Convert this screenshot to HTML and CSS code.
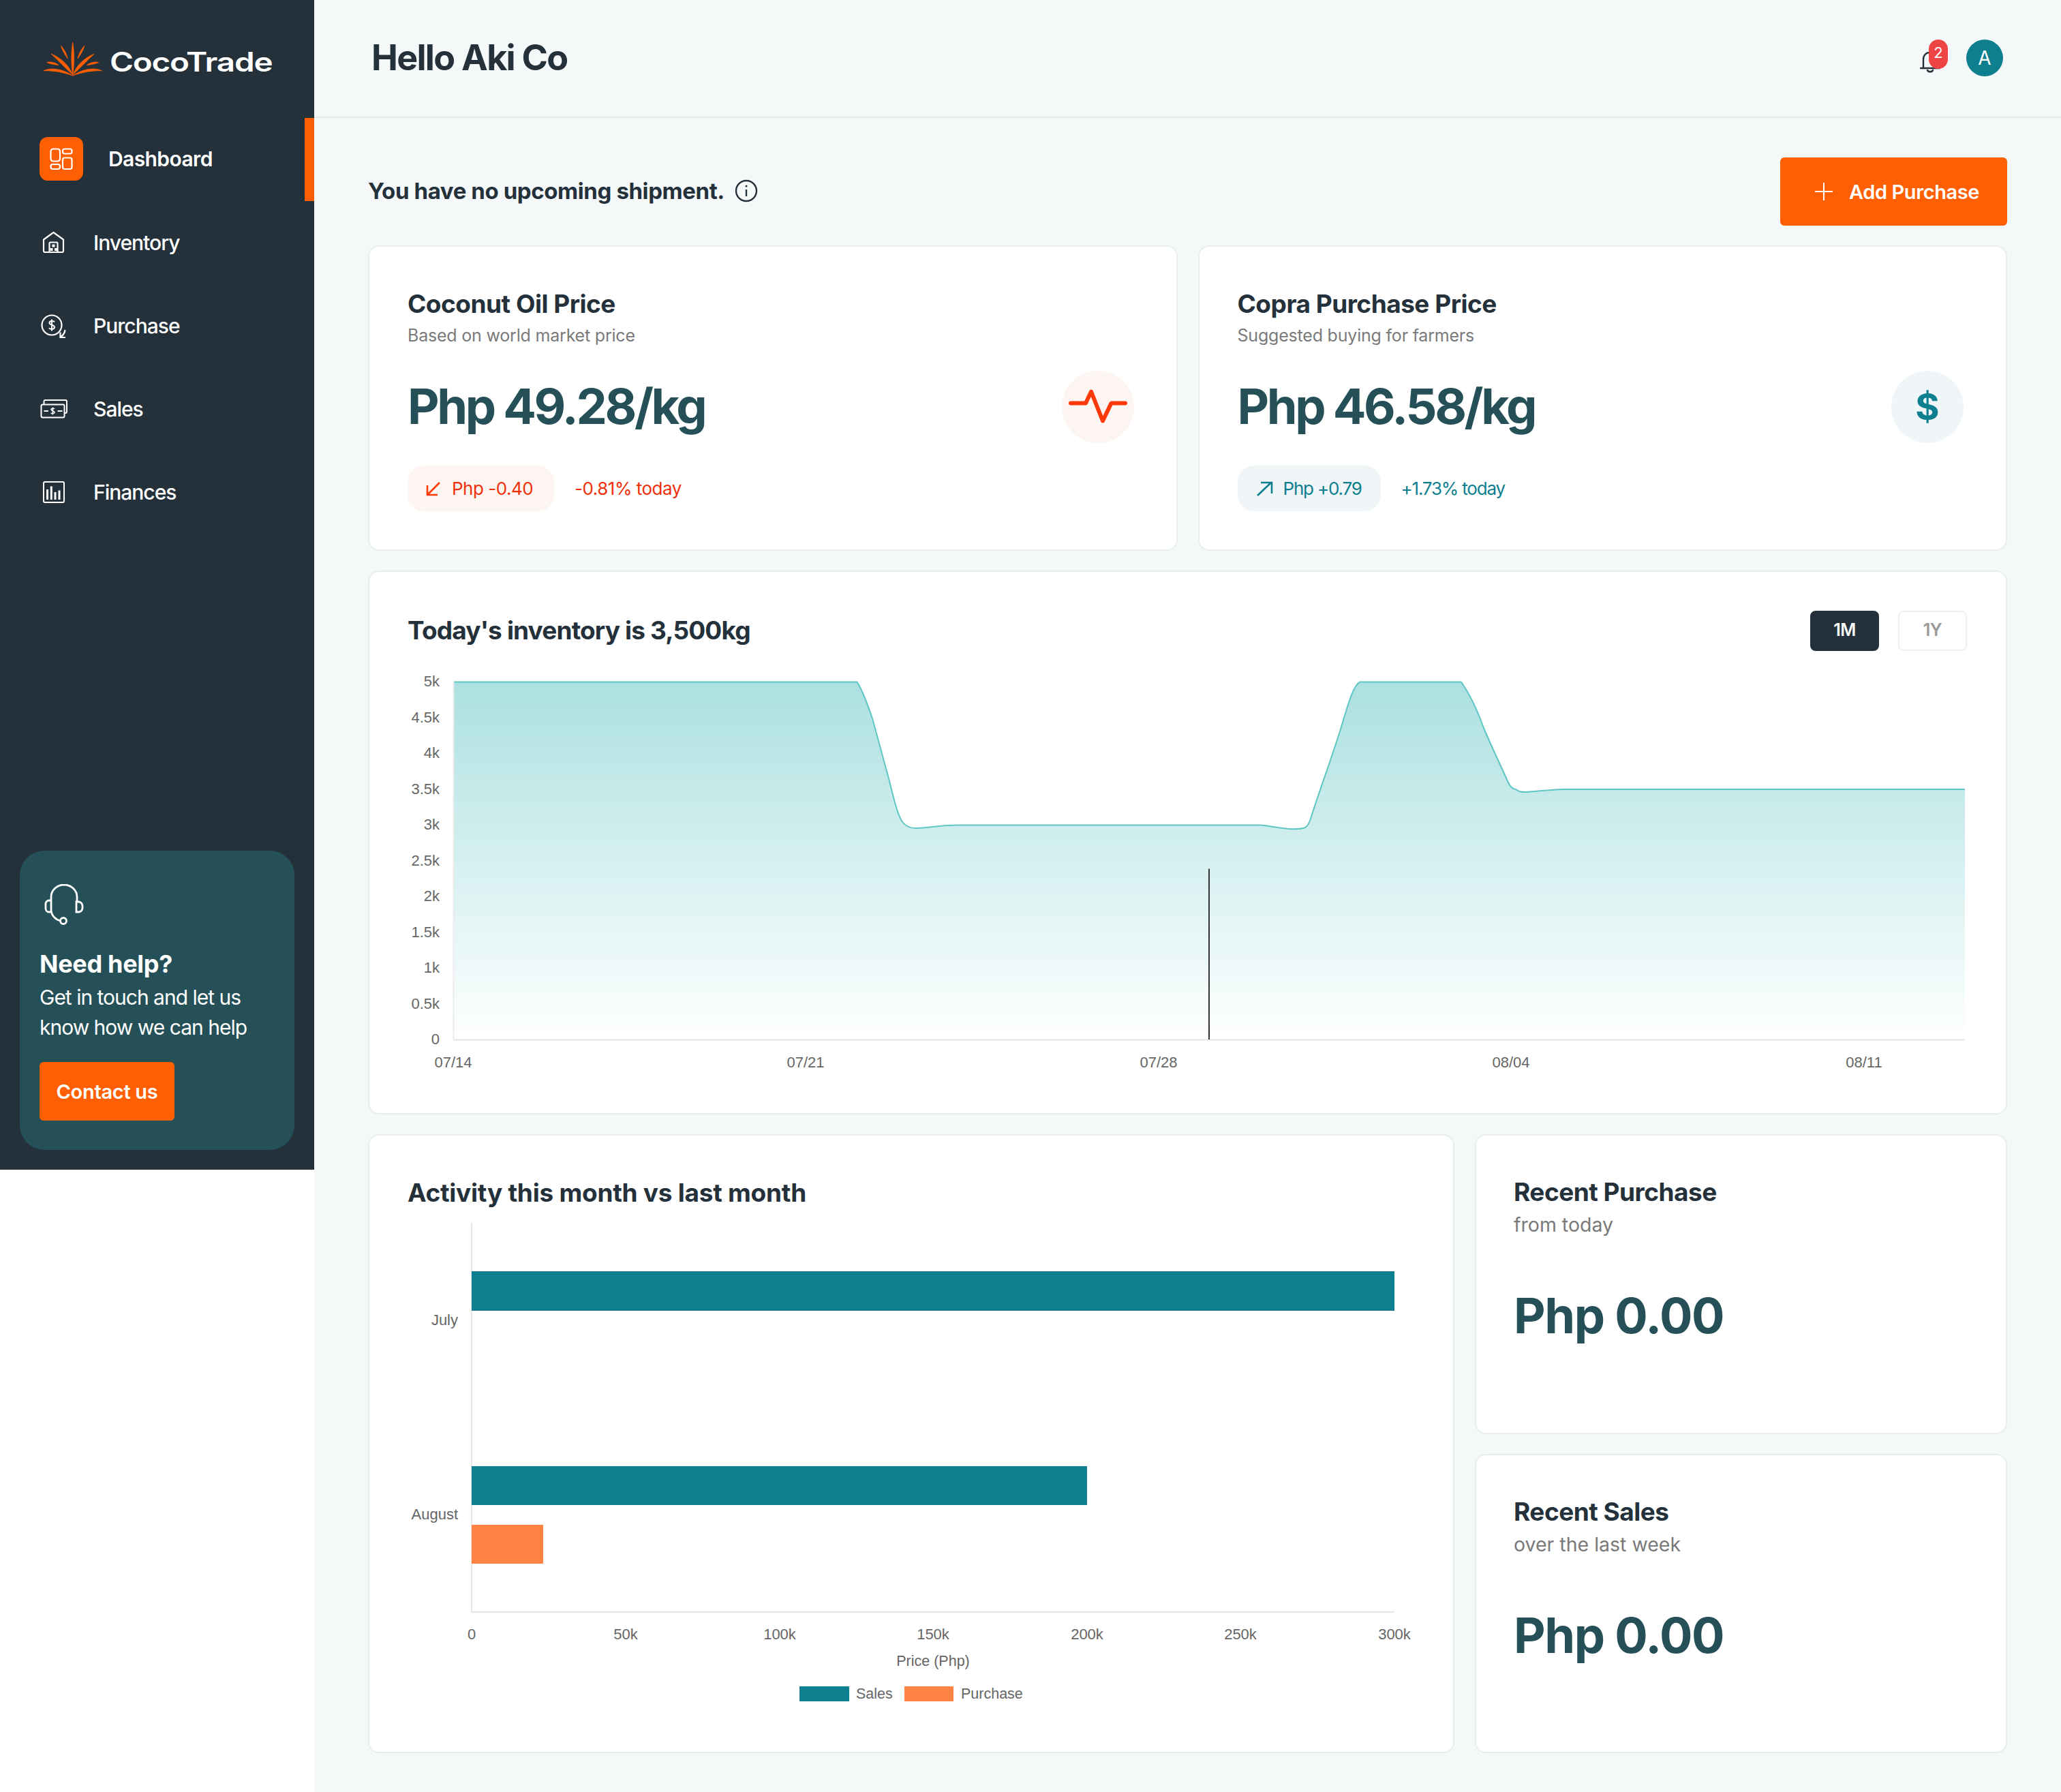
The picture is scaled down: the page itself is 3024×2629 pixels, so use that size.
FILE: index.html
```html
<!DOCTYPE html>
<html>
<head>
  <title>CocoTrade</title>
  <link rel="stylesheet" href="styles.css">
</head>
<body>
  <div class="layout">
    <aside class="sidebar">
      <div class="logo">
        <svg class="logo-mark" width="86" height="50" viewBox="0 0 86 50">
          <g fill="#ff5f03" stroke="#ff5f03" stroke-width="0.7">
            <path d="M42.7 0C45 14 45.5 30 42.7 49C40 30 40.5 14 42.7 0Z"/>
            <path d="M11 17C24 22 37 33 42 47C32 38 22 27 11 17Z"/>
            <path d="M25.3 5C30 10 34 17 35.3 24C31 18 27 11 25.3 5Z"/>
            <path d="M4.7 29.5C11 28 18 30 22 33.5C15 33 9 31.5 4.7 29.5Z"/>
            <path d="M0 41.7C12 36 30 40 42.5 49C30 44 14 41.5 0 41.7Z"/>
            <g transform="matrix(-1 0 0 1 85.4 0)">
              <path d="M11 17C24 22 37 33 42 47C32 38 22 27 11 17Z"/>
              <path d="M25.3 5C30 10 34 17 35.3 24C31 18 27 11 25.3 5Z"/>
              <path d="M4.7 29.5C11 28 18 30 22 33.5C15 33 9 31.5 4.7 29.5Z"/>
              <path d="M0 41.7C12 36 30 40 42.5 49C30 44 14 41.5 0 41.7Z"/>
            </g>
          </g>
        </svg>
        <span class="logo-text">CocoTrade</span>
      </div>

      <nav class="nav">
        <a class="nav-item active">
          <span class="nav-tile">
            <svg width="64" height="64" viewBox="0 0 64 64" fill="none" stroke="#fff" stroke-width="2.2">
              <rect x="16.5" y="17.5" width="13.5" height="18" rx="3.5"/>
              <rect x="34" y="17.5" width="13.5" height="7" rx="3"/>
              <rect x="34" y="30.5" width="13.5" height="16.5" rx="3"/>
              <rect x="16.5" y="40" width="13.5" height="7" rx="3"/>
            </svg>
          </span>
          Dashboard
        </a>
        <a class="nav-item">
          <span class="nav-icon">
            <svg width="34" height="34" viewBox="0 0 34 34" fill="none" stroke="#fff" stroke-width="2.2" stroke-linejoin="round">
              <path d="M2 12.5L16.5 2L31 12.5V29A2 2 0 0 1 29 31H4A2 2 0 0 1 2 29Z"/>
              <path d="M10.5 31V18A1.5 1.5 0 0 1 12 16.5H21A1.5 1.5 0 0 1 22.5 18V31"/>
              <g fill="#fff" stroke="none">
                <rect x="14.5" y="19.5" width="4" height="4"/>
                <rect x="11.5" y="25" width="4" height="4"/>
                <rect x="18" y="25" width="4" height="4"/>
              </g>
            </svg>
          </span>
          Inventory
        </a>
        <a class="nav-item">
          <span class="nav-icon">
            <svg width="40" height="40" viewBox="0 0 40 40" fill="none" stroke="#fff" stroke-width="2.2">
              <circle cx="17" cy="19" r="14.5"/>
              <path d="M21 14.5C20 12.5 13.5 12.3 13.5 15.8C13.5 19.3 21 18.2 21 22C21 25.5 14.5 25.5 13 23.2M17 10.5V27.5" stroke-width="2"/>
              <path d="M36.5 26C36 30 33.5 34 29.5 37M29.5 29.5V37H37"/>
            </svg>
          </span>
          Purchase
        </a>
        <a class="nav-item">
          <span class="nav-icon">
            <svg width="40" height="28" viewBox="0 0 40 28" fill="none" stroke="#fff" stroke-width="2">
              <rect x="1.5" y="7.5" width="34" height="19" rx="2"/>
              <path d="M5.5 7V3A2 2 0 0 1 7.5 1H37A2 2 0 0 1 39 3V18A2 2 0 0 1 37 20H35.5"/>
              <path d="M5.5 17H12M25.5 17H32.5"/>
              <path d="M21 14C20.5 12.8 16 12.7 16 14.8C16 17 21 16.4 21 18.8C21 21 16.5 21 15.8 19.8M18.4 11.5V22.5" stroke-width="1.5"/>
            </svg>
          </span>
          Sales
        </a>
        <a class="nav-item">
          <span class="nav-icon">
            <svg width="32" height="32" viewBox="0 0 32 32" fill="none" stroke="#fff" stroke-width="2">
              <rect x="1" y="1" width="30" height="30" rx="2"/>
              <path d="M6.5 27V12M12.3 27V7.5M18 27V16M24 27V13.5" stroke-width="3"/>
            </svg>
          </span>
          Finances
        </a>
      </nav>

      <div class="help">
        <svg class="help-icon" width="58" height="60" viewBox="0 0 58 60" fill="none" stroke="#fff" stroke-width="2.8">
          <path d="M24 54C16 52 10 46 10 37V19A19 18 0 0 1 48 19V27"/>
          <circle cx="28" cy="54" r="4.5"/>
          <path d="M47 26H50A6 6 0 0 1 56 32V35A6 6 0 0 1 50 41H47Z"/>
          <path d="M9.500 24H7A5 5 0 0 0 2 29V36A5 5 0 0 0 7 41H9.500"/>
        </svg>
        <h3 class="help-title">Need help?</h3>
        <p class="help-text">Get in touch and let us<br>know how we can help</p>
        <button class="contact-btn">Contact us</button>
      </div>
    </aside>

    <main class="main">
      <header class="topbar">
        <h1 class="greeting">Hello Aki Co</h1>
        <div class="top-actions">
          <div class="bell">
            <svg width="30" height="34" viewBox="0 0 30 34" fill="none" stroke="#24303a" stroke-width="2.4" stroke-linecap="round">
              <path d="M5 27V14C5 8 9 4 15 4C21 4 25 8 25 14V27"/>
              <path d="M1 27H29"/>
              <path d="M11 30C12 33 18 33 19 30"/>
            </svg>
            <span class="badge">2</span>
          </div>
          <div class="avatar">A</div>
        </div>
      </header>

      <div class="content">
        <div class="ship-row">
          <div class="ship-note">
            You have no upcoming shipment.
            <svg width="34" height="34" viewBox="0 0 34 34" fill="none" stroke="#24303a" stroke-width="2.4">
              <circle cx="17" cy="17" r="15"/>
              <path d="M17 15V25"/>
              <circle cx="17" cy="10" r="1.500" fill="#24303a" stroke="none"/>
            </svg>
          </div>
          <button class="add-btn">
            <svg width="28" height="28" viewBox="0 0 28 28" stroke="#fff" stroke-width="2"><path d="M14 1V27M1 14H27"/></svg>
            Add Purchase
          </button>
        </div>

        <div class="stats">
          <section class="card stat">
            <h2 class="card-title">Coconut Oil Price</h2>
            <p class="card-sub">Based on world market price</p>
            <div class="price-row">
              <div class="price">Php 49.28/kg</div>
              <div class="circle circle-red">
                <svg width="106" height="106" viewBox="0 0 106 106" fill="none" stroke="#ff3a0a" stroke-width="6" stroke-linecap="round" stroke-linejoin="round">
                  <path d="M13 47.500H35L43 30.500L60 73.500L72.500 47.500H93"/>
                </svg>
              </div>
            </div>
            <div class="change down">
              <span class="pill">
                <svg width="24" height="24" viewBox="0 0 24 24" fill="none" stroke="#ff3a0a" stroke-width="2.6"><path d="M21 3L4 20M3 7V21H18"/></svg>
                Php -0.40
              </span>
              <span>-0.81% today</span>
            </div>
          </section>

          <section class="card stat">
            <h2 class="card-title">Copra Purchase Price</h2>
            <p class="card-sub">Suggested buying for farmers</p>
            <div class="price-row">
              <div class="price">Php 46.58/kg</div>
              <div class="circle circle-teal">$</div>
            </div>
            <div class="change up">
              <span class="pill">
                <svg width="26" height="24" viewBox="0 0 26 24" fill="none" stroke="#0e7f8f" stroke-width="2.6"><path d="M3 22L23 3M8 3H24V19"/></svg>
                Php +0.79
              </span>
              <span>+1.73% today</span>
            </div>
          </section>
        </div>

        <section class="card inventory">
          <div class="inv-head">
            <h2 class="card-title narrow">Today's inventory is 3,500kg</h2>
            <div class="range">
              <button class="range-btn on">1M</button>
              <button class="range-btn">1Y</button>
            </div>
          </div>
          <svg class="line-chart" width="2287" height="610" viewBox="0 0 2287 610">
            <defs>
              <linearGradient id="fade" x1="0" y1="0" x2="0" y2="1">
                <stop offset="0" stop-color="#ace0e0"/>
                <stop offset="1" stop-color="#ffffff"/>
              </linearGradient>
            </defs>
            <path fill="url(#fade)" d="M67 25.500H658.500C668 40 675 62 681 79C690 112 698 141 706 171C712 195 718 222 726 232C731 238 737 240 745 240C765 239 785 235.500 805 235.500H1251C1270 237 1290 243 1304 241C1316 241 1320 239 1324 226C1337 185 1352 145 1367 98C1378 62 1386 30 1396.600 25.500H1545C1555 40 1568 65 1578 93C1590 122 1603 148 1613 171C1617 180 1621 183 1625 183C1630 187 1634 187 1639 187C1660 186 1675 183 1696 183H2284V550.500H67Z"/>
            <path fill="none" stroke="#5ec6c3" stroke-width="2" d="M67 25.500H658.500C668 40 675 62 681 79C690 112 698 141 706 171C712 195 718 222 726 232C731 238 737 240 745 240C765 239 785 235.500 805 235.500H1251C1270 237 1290 243 1304 241C1316 241 1320 239 1324 226C1337 185 1352 145 1367 98C1378 62 1386 30 1396.600 25.500H1545C1555 40 1568 65 1578 93C1590 122 1603 148 1613 171C1617 180 1621 183 1625 183C1630 187 1634 187 1639 187C1660 186 1675 183 1696 183H2284"/>
            <path d="M66.500 25V550.500" stroke="#ececec" stroke-width="2"/>
            <path d="M66 550.500H2284" stroke="#e6e6e6" stroke-width="2"/>
            <path d="M1175 299.500V550" stroke="#333" stroke-width="2"/>
            <g class="tick" text-anchor="end">
              <text x="46" y="32">5k</text>
              <text x="46" y="84.500">4.5k</text>
              <text x="46" y="137">4k</text>
              <text x="46" y="189.500">3.5k</text>
              <text x="46" y="242">3k</text>
              <text x="46" y="294.500">2.5k</text>
              <text x="46" y="347">2k</text>
              <text x="46" y="399.500">1.5k</text>
              <text x="46" y="452">1k</text>
              <text x="46" y="504.500">0.5k</text>
              <text x="46" y="557">0</text>
            </g>
            <g class="tick" text-anchor="middle">
              <text x="66" y="591">07/14</text>
              <text x="583" y="591">07/21</text>
              <text x="1101" y="591">07/28</text>
              <text x="1618" y="591">08/04</text>
              <text x="2136" y="591">08/11</text>
            </g>
          </svg>
        </section>

        <div class="bottom">
          <section class="card activity">
            <h2 class="card-title wide">Activity this month vs last month</h2>
            <svg class="bar-chart" width="1476" height="725" viewBox="0 0 1476 725">
              <path d="M93 8V580M92 580H1447" stroke="#e6e6e6" stroke-width="2" fill="none"/>
              <rect x="93" y="80" width="1354" height="58" fill="#0e7f8f"/>
              <rect x="93" y="366" width="903" height="57" fill="#0e7f8f"/>
              <rect x="93" y="452" width="105" height="57" fill="#ff8343"/>
              <g class="tick" text-anchor="end">
                <text x="73" y="159">July</text>
                <text x="73" y="444">August</text>
              </g>
              <g class="tick" text-anchor="middle">
                <text x="93" y="620">0</text>
                <text x="319" y="620">50k</text>
                <text x="545" y="620">100k</text>
                <text x="770" y="620">150k</text>
                <text x="996" y="620">200k</text>
                <text x="1221" y="620">250k</text>
                <text x="1447" y="620">300k</text>
                <text class="tick-small" x="770" y="659">Price (Php)</text>
              </g>
              <rect x="574" y="689" width="73" height="22" fill="#0e7f8f"/>
              <text class="tick tick-small" x="657" y="707">Sales</text>
              <rect x="728" y="689" width="72" height="22" fill="#ff8343"/>
              <text class="tick tick-small" x="811" y="707">Purchase</text>
            </svg>
          </section>
          <div class="recent">
            <section class="card recent-card">
              <h2 class="card-title">Recent Purchase</h2>
              <p class="recent-sub">from today</p>
              <div class="price recent-price">Php 0.00</div>
            </section>
            <section class="card recent-card">
              <h2 class="card-title">Recent Sales</h2>
              <p class="recent-sub">over the last week</p>
              <div class="price recent-price">Php 0.00</div>
            </section>
          </div>
        </div>
      </div>
    </main>
  </div>
</body>
</html>
```

FILE: styles.css
```css
* {
  box-sizing: border-box;
}
body {
  margin: 0;
  background: #fff;
  color: #24303a;
  font-family: Inter, "Liberation Sans", sans-serif;
}
h1, h2, h3, p {
  margin: 0;
}
.layout {
  display: flex;
  align-items: flex-start;
}

/* sidebar */
.sidebar {
  display: flex;
  flex-direction: column;
  flex: none;
  width: 461px;
  height: 1716px;
  background: #24303a;
  color: #fff;
}
.logo {
  display: flex;
  align-items: center;
  gap: 11px;
  height: 173px;
  padding-left: 64px;
}
.logo-text {
  margin-top: 7px;
  font-size: 39px;
  font-weight: 600;
  transform: scaleX(1.22);
  transform-origin: left center;
  letter-spacing: -1px;
}
.nav-item {
  display: flex;
  align-items: center;
  position: relative;
  gap: 37px;
  height: 122px;
  padding-left: 58px;
  font-size: 30px;
  font-weight: 500;
  letter-spacing: -1px;
}
.nav-item.active {
  font-weight: 600;
  letter-spacing: -0.6px;
  padding-bottom: 2px;
}
.nav-item.active::after {
  content: "";
  position: absolute;
  top: 0;
  right: 0;
  bottom: 0;
  width: 14px;
  background: #ff5f03;
}
.nav-tile {
  display: flex;
  width: 64px;
  height: 64px;
  background: #ff5f03;
  border-radius: 12px;
}
.nav-icon {
  display: flex;
  align-items: center;
  justify-content: center;
  width: 42px;
}
.help {
  display: flex;
  flex-direction: column;
  align-items: flex-start;
  margin: auto 29px 29px;
  width: 403px;
  height: 439px;
  padding: 49px 29px 0;
  background: #255058;
  border-radius: 36px;
}
.help-icon {
  margin-left: 7px;
}
.help-title {
  margin-top: 35px;
  font-size: 36px;
  line-height: 44px;
  font-weight: 700;
  letter-spacing: -0.3px;
}
.help-text {
  margin-top: 5px;
  font-size: 30px;
  line-height: 44px;
  letter-spacing: -1px;
}
.contact-btn {
  width: 198px;
  height: 86px;
  margin-top: 29px;
  border: 0;
  border-radius: 6px;
  background: #ff5f03;
  color: #fff;
  font: 600 29px Inter, sans-serif;
  letter-spacing: -0.3px;
}

/* main */
.main {
  flex: 1;
  min-height: 2629px;
  background: #f4f8f9;
}
.topbar {
  display: flex;
  align-items: center;
  justify-content: space-between;
  height: 173px;
  padding: 0 85px 1px 84px;
  border-bottom: 2px solid #e6ebed;
}
.greeting {
  margin-bottom: 2px;
  font-size: 52px;
  font-weight: 650;
  letter-spacing: -1.7px;
}
.top-actions {
  display: flex;
  align-items: center;
  gap: 30px;
}
.bell {
  position: relative;
  width: 38px;
  height: 44px;
  padding-top: 10px;
}
.badge {
  position: absolute;
  top: -5px;
  right: -3px;
  width: 28px;
  height: 43px;
  border-radius: 14px;
  background: #ef4444;
  color: #fff;
  font-size: 22px;
  line-height: 38px;
  text-align: center;
}
.avatar {
  width: 54px;
  height: 54px;
  border-radius: 50%;
  background: #0e7f8f;
  color: #fff;
  font-size: 28px;
  line-height: 54px;
  text-align: center;
}
.content {
  display: flex;
  flex-direction: column;
  gap: 29px;
  padding: 58px 79px 0;
}
.ship-row {
  display: flex;
  align-items: center;
  justify-content: space-between;
  height: 100px;
}
.ship-note {
  display: flex;
  align-items: center;
  gap: 15px;
  padding-bottom: 2px;
  font-size: 33px;
  font-weight: 650;
  letter-spacing: -0.4px;
}
.add-btn {
  display: flex;
  align-items: center;
  gap: 23px;
  width: 333px;
  height: 100px;
  padding-left: 50px;
  border: 0;
  border-radius: 6px;
  background: #ff5f03;
  color: #fff;
  font: 600 29px Inter, sans-serif;
  letter-spacing: -0.4px;
}
.stats {
  display: grid;
  grid-template-columns: 1fr 1fr;
  gap: 30px;
}
.card {
  background: #fff;
  border: 2px solid #e6eef0;
  border-radius: 16px;
}
.stat {
  height: 448px;
  padding: 64px 62px 0 56px;
}
.card-title {
  font-size: 37px;
  line-height: 40px;
  font-weight: 650;
  letter-spacing: -0.5px;
}
.card-title.wide {
  letter-spacing: -0.25px;
}
.card-title.narrow {
  letter-spacing: -0.85px;
}
.card-sub {
  margin-top: 10px;
  font-size: 25px;
  line-height: 32px;
  color: #7a7a7a;
  letter-spacing: -0.2px;
}
.price-row {
  display: flex;
  align-items: center;
  justify-content: space-between;
  margin-top: 36px;
}
.price-row .price {
  padding-bottom: 3px;
}
.price {
  font-size: 72px;
  font-weight: 650;
  color: #255058;
  letter-spacing: -3.4px;
}
.circle {
  width: 106px;
  height: 106px;
  border-radius: 50%;
}
.circle-red {
  background: #fdf5f1;
}
.circle-teal {
  background: #f0f5f7;
  color: #0e7f8f;
  font-size: 54px;
  font-weight: 700;
  line-height: 106px;
  text-align: center;
}
.change {
  display: flex;
  align-items: center;
  gap: 30px;
  margin-top: 33px;
  font-size: 26px;
  letter-spacing: -0.5px;
}
.pill {
  display: flex;
  align-items: center;
  gap: 15px;
  height: 67px;
  padding: 0 28px 0 26px;
  border-radius: 24px;
}
.down {
  color: #f0300a;
}
.down .pill {
  background: #fdf5f1;
  padding-right: 31px;
}
.up {
  color: #0e7f8f;
  letter-spacing: -1.2px;
}
.up .pill {
  background: #f0f5f7;
}
.inventory {
  height: 798px;
  padding: 56px 57px 0 56px;
}
.inv-head {
  display: flex;
  align-items: center;
  justify-content: space-between;
  height: 60px;
}
.range {
  display: flex;
  gap: 28px;
}
.range-btn {
  width: 101px;
  height: 59px;
  padding-bottom: 3px;
  border: 2px solid #f0f0f0;
  border-radius: 8px;
  background: #fff;
  color: #9a9a9a;
  font: 600 25px Inter, sans-serif;
  letter-spacing: -0.5px;
}
.range-btn.on {
  border-color: #24303a;
  background: #24303a;
  color: #fff;
}
.line-chart {
  display: block;
  margin: 20px 0 0 1px;
}
.tick {
  font-family: "Liberation Sans", sans-serif;
  font-size: 22px;
  fill: #666;
}
.tick-small {
  font-size: 21.5px;
}
.bottom {
  display: grid;
  grid-template-columns: 1fr 781px;
  gap: 30px;
}
.activity {
  height: 908px;
  padding: 64px 57px 0 56px;
}
.bar-chart {
  display: block;
  margin: 15px 0 0 1px;
}
.recent {
  display: flex;
  flex-direction: column;
  gap: 29px;
}
.recent-card {
  flex: 1;
  padding: 63px 55px 0;
}
.recent-sub {
  margin-top: 12px;
  font-size: 28.500px;
  line-height: 32px;
  color: #7a7a7a;
}
.recent-price {
  margin-top: 77px;
  line-height: 80px;
  letter-spacing: -1.4px;
}
```
